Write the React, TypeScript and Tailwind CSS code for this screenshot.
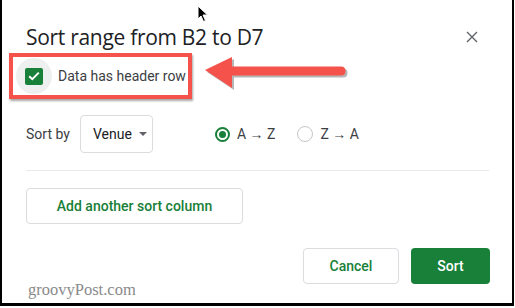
import React from "react";

function Cursor() {
  return (
    <svg
      className="absolute left-[197px] top-[5px]"
      width="12"
      height="18"
      viewBox="0 0 12 18"
    >
      <path
        d="M1 1 L1 14 L4 11 L6.5 16.5 L8.5 15.5 L6 10 L10.5 10 Z"
        fill="#000"
        stroke="#fff"
        strokeWidth="1"
      />
    </svg>
  );
}

function Arrow() {
  return (
    <svg
      className="absolute left-[203px] top-[54px]"
      width="146"
      height="40"
      viewBox="0 0 146 40"
    >
      <g transform="translate(2 2)" fill="#7a7a7a" opacity="0.55">
        <path d="M2 16 L29 3 L29 12.5 L138 12.5 Q142.5 12.5 142.5 17 Q142.5 21.5 138 21.5 L29 21.5 L29 34 Z" />
      </g>
      <path
        d="M2 16 L29 3 L29 12.5 L138 12.5 Q142.5 12.5 142.5 17 Q142.5 21.5 138 21.5 L29 21.5 L29 34 Z"
        fill="#f4524b"
      />
    </svg>
  );
}

export default function App() {
  return (
    <div className="w-[515px] h-[308px] bg-white relative overflow-hidden font-['Roboto',sans-serif]">
      <div className="w-[514px] h-[306px] border-l-2 border-r-2 border-b-[3px] border-black flex flex-col">
        <div className="flex items-center justify-between pl-[24px] pr-[34px] pt-[22px]">
          <h1 className="text-[21px] leading-[30px] text-[#202124] font-['Open_Sans',sans-serif] tracking-[-0.3px]">
            Sort range from B2 to D7
          </h1>
          <svg width="12" height="12" viewBox="0 0 12 12">
            <path d="M1 1 L11 11 M11 1 L1 11" stroke="#5f6368" strokeWidth="1.4" />
          </svg>
        </div>

        <div className="ml-[7px] mt-[1px] w-[183px] h-[46px] border-[4px] border-[#f4524b] shadow-[1px_2px_2px_rgba(0,0,0,0.35)] flex items-center">
          <div className="ml-[3px] w-[36px] h-[36px] rounded-full bg-[#eef0f0] flex items-center justify-center">
            <div className="w-[18px] h-[17px] rounded-[2px] bg-[#188038] flex items-center justify-center">
              <svg width="12" height="10" viewBox="0 0 12 10">
                <path d="M1.2 5.2 L4.3 8.2 L10.8 1.6" stroke="#fff" strokeWidth="2" fill="none" />
              </svg>
            </div>
          </div>
          <span className="ml-[6px] text-[14px] text-[#3c4043] whitespace-nowrap">
            Data has header row
          </span>
        </div>

        <div className="flex items-center pl-[24px] mt-[16px]">
          <span className="text-[14px] text-[#3c4043] w-[54px]">Sort by</span>
          <div className="w-[73px] h-[38px] border border-[#dadce0] rounded-[4px] flex items-center pl-[12px] gap-[7px]">
            <span className="text-[14px] text-[#202124]">Venue</span>
            <svg width="8" height="4" viewBox="0 0 8 4">
              <path d="M0 0 L8 0 L4 4 Z" fill="#5f6368" />
            </svg>
          </div>
          <div className="ml-[62px] flex items-center gap-[7px]">
            <div className="w-[15px] h-[15px] rounded-full border-2 border-[#188038] flex items-center justify-center">
              <div className="w-[7px] h-[7px] rounded-full bg-[#188038]" />
            </div>
            <span className="text-[14px] text-[#3c4043]">A → Z</span>
          </div>
          <div className="ml-[22px] flex items-center gap-[7px]">
            <div className="w-[16px] h-[16px] rounded-full border border-[#c4c7c5]" />
            <span className="text-[14px] text-[#3c4043]">Z → A</span>
          </div>
        </div>

        <div className="ml-[24px] mr-[23px] mt-[17px] h-px bg-[#e8eaed]" />

        <div className="pl-[24px] mt-[17px]">
          <button className="w-[217px] h-[36px] border border-[#dadce0] rounded-[4px] text-[14px] font-medium text-[#188038]">
            Add another sort column
          </button>
        </div>

        <div className="flex justify-end gap-[12px] pr-[22px] mt-[24px]">
          <button className="w-[96px] h-[36px] border border-[#dadce0] rounded-[4px] text-[14px] font-medium text-[#188038]">
            Cancel
          </button>
          <button className="w-[79px] h-[36px] rounded-[4px] bg-[#188038] text-[14px] font-medium text-white">
            Sort
          </button>
        </div>
      </div>

      <span className="absolute left-[28px] top-[278px] text-[16.5px] text-[#8a8a8a] font-['Liberation_Serif',serif]">
        groovyPost.com
      </span>
      <Arrow />
      <Cursor />
    </div>
  );
}
